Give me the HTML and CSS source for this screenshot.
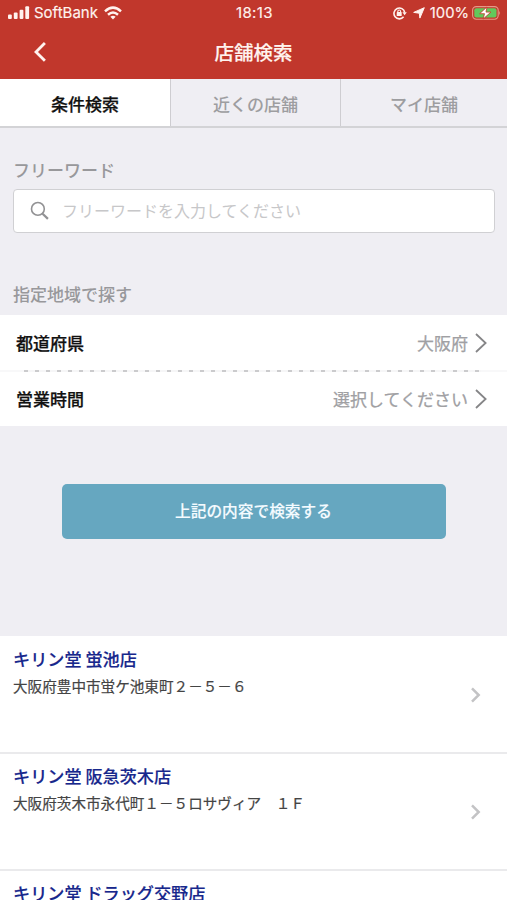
FILE: index.html
```html
<!DOCTYPE html>
<html lang="ja">
<head>
<meta charset="utf-8">
<title>店舗検索</title>
<link rel="stylesheet" href="styles.css">
</head>
<body>
<header class="header">
  <div class="status">
    <div class="status-left">
      <svg class="signal" width="22" height="14" viewBox="0 0 22 14" fill="currentColor"><rect x="0" y="8.6" width="3.8" height="4.4" rx="1"/><rect x="5.8" y="6.6" width="3.8" height="6.4" rx="1"/><rect x="11.6" y="3.8" width="3.8" height="9.2" rx="1"/><rect x="17.3" y="0.3" width="3.8" height="12.7" rx="1"/></svg>
      <span class="carrier">SoftBank</span>
      <svg class="wifi" width="18" height="14" viewBox="0 0 18 14" fill="none" stroke="currentColor" stroke-width="2.5"><path d="M1 5.3Q9-2 17 5.3"/><path d="M4 8.7Q9 4.3 14 8.7"/><path d="M6.4 10.7Q9 8.8 11.6 10.7L9 13.5Z" fill="currentColor" stroke="none"/></svg>
    </div>
    <span class="clock">18:13</span>
    <div class="status-right">
      <svg class="lock" width="14" height="14" viewBox="0 0 14 14" fill="none" stroke="currentColor"><path d="M10.6 10.8A5.4 5.4 0 1 1 11.7 6.5" stroke-width="1.6"/><path d="M9.4 6.3h4.4L11.6 9.3Z" fill="currentColor" stroke="none"/><rect x="3.7" y="6.1" width="5" height="4" rx=".6" fill="currentColor" stroke="none"/><path d="M4.8 6.5V5.4a1.4 1.4 0 0 1 2.8 0v1.1" stroke-width="1.1"/></svg>
      <svg class="location" width="12" height="12" viewBox="0 0 12 12" fill="currentColor" stroke="currentColor" stroke-width="1" stroke-linejoin="round"><path d="M11.3.7 6.9 11.1 6.3 6.2.7 5.4Z"/></svg>
      <span class="percent">100%</span>
      <svg class="battery" width="29" height="14" viewBox="0 0 29 14"><rect x=".6" y=".6" width="25.6" height="12.6" rx="3.6" fill="none" stroke="#e59a88" stroke-width="1.1"/><rect x="2.3" y="2.3" width="22.2" height="9.2" rx="2" fill="#62c95b"/><path d="M27.2 4.8q1.8 2.2 0 4.4Z" fill="#e59a88"/><path d="M15 .9 7.6 7.7h4.9l-1.4 5.4 7.8-7H14Z" fill="#fff" stroke="#c1372c" stroke-width=".8"/></svg>
    </div>
  </div>
  <div class="nav">
    <svg class="back" width="14" height="22" viewBox="0 0 14 22" fill="none" stroke="currentColor" stroke-width="2.8"><path d="M11.9 2 3 10.9l8.9 8.9"/></svg>
    <h1 class="title">店舗検索</h1>
  </div>
</header>
<nav class="tabs">
  <span class="tab active">条件検索</span>
  <span class="tab">近くの店舗</span>
  <span class="tab">マイ店舗</span>
</nav>
<main>
  <h2 class="label keyword-label">フリーワード</h2>
  <div class="search">
    <svg width="20" height="20" viewBox="0 0 20 20" fill="none" stroke="#929294"><circle cx="7.9" cy="7.9" r="6.4" stroke-width="1.6"/><path d="m12.6 12.7 5.3 5.2" stroke-width="2.2"/></svg>
    <span class="placeholder">フリーワードを入力してください</span>
  </div>
  <h2 class="label region-label">指定地域で探す</h2>
  <section class="filters">
    <div class="filter"><span class="filter-name">都道府県</span><span class="filter-value">大阪府</span><svg width="12" height="20" viewBox="0 0 12 20" fill="none" stroke="#858587" stroke-width="1.8"><path d="m1 1 9.6 9L1 19"/></svg></div>
    <div class="divider"></div>
    <div class="filter"><span class="filter-name">営業時間</span><span class="filter-value">選択してください</span><svg width="12" height="20" viewBox="0 0 12 20" fill="none" stroke="#858587" stroke-width="1.8"><path d="m1 1 9.6 9L1 19"/></svg></div>
  </section>
  <div class="submit">上記の内容で検索する</div>
  <section class="stores">
    <article class="store">
      <div><h3 class="store-name">キリン堂 蛍池店</h3><p class="address">大阪府豊中市蛍ケ池東町２－５－６</p></div>
      <svg width="11" height="16" viewBox="0 0 11 16" fill="none" stroke="#c3c3c5" stroke-width="2.5"><path d="m2 1.3 6.7 6.7L2 14.7"/></svg>
    </article>
    <article class="store">
      <div><h3 class="store-name">キリン堂 阪急茨木店</h3><p class="address">大阪府茨木市永代町１－５ロサヴィア　１Ｆ</p></div>
      <svg width="11" height="16" viewBox="0 0 11 16" fill="none" stroke="#c3c3c5" stroke-width="2.5"><path d="m2 1.3 6.7 6.7L2 14.7"/></svg>
    </article>
    <article class="store">
      <div><h3 class="store-name">キリン堂 ドラッグ交野店</h3></div>
    </article>
  </section>
</main>
</body>
</html>
```
FILE: styles.css
```css
* { box-sizing: border-box; }
body {
  margin: 0;
  height: 900px;
  overflow: hidden;
  background: #efeef3;
  color: #111;
  font-family: "Noto Sans CJK JP", sans-serif;
}
h1, h2, h3, p { margin: 0; }
svg { display: block; flex: none; }

.header { height: 79px; background: #c1372c; color: #fff3ef; }
.status {
  display: grid;
  grid-template-columns: 1fr 37px 1fr;
  align-items: center;
  height: 26px;
  padding: 0 6px 0 8px;
  font-family: Inter, sans-serif;
  font-size: 15px;
  line-height: 26px;
  -webkit-text-stroke: .15px;
}
.status-left, .status-right { display: flex; align-items: center; }
.status-right { justify-content: flex-end; }
.carrier { margin: 0 6px 0 4px; }
.clock { letter-spacing: .35px; }
.lock { margin-right: 6px; }
.location { margin-right: 5px; }
.percent { margin-right: 3px; font-size: 14.8px; }
.nav {
  display: grid;
  grid-template-columns: 61px 1fr 61px;
  align-items: center;
  height: 52px;
}
.back { margin-left: 33px; }
.title { text-align: center; font-size: 19.5px; font-weight: 500; line-height: 52px; -webkit-text-stroke: .15px; }

.tabs {
  display: grid;
  grid-template-columns: 170px 170px 1fr;
  grid-template-rows: 47px;
  height: 49px;
  border-bottom: 2px solid #d3d3d6;
}
.tab {
  border-left: 1px solid #cecdd1;
  color: #9d9da0;
  font-size: 17px;
  font-weight: 500;
  line-height: 49px;
  text-align: center;
}
.tab.active { border-left: 0; background: #fff; color: #111; -webkit-text-stroke: .25px; }

.label { margin-left: 13px; color: #98989b; font-size: 17px; font-weight: 500; line-height: 24px; }
.keyword-label { margin-top: 30px; }
.search {
  display: flex;
  align-items: center;
  gap: 12px;
  height: 44px;
  margin: 7px 12px 0 13px;
  padding-left: 16px;
  border: 1px solid #d0d0d3;
  border-radius: 4px;
  background: #fff;
}
.placeholder { padding-bottom: 3px; color: #c7c7c9; font-size: 16px; line-height: 24px; }
.region-label { margin-top: 49px; }

.filters { margin-top: 9px; background: #fff; }
.filter { display: flex; align-items: center; height: 55px; padding: 0 20px 0 16px; }
.filter:last-child { height: 54px; padding-bottom: 1px; }
.filter-name { flex: 1; padding-bottom: 1px; font-size: 17px; font-weight: 500; -webkit-text-stroke: .25px; }
.filter-value { margin-right: 7px; padding-bottom: 1px; color: #a0a0a3; font-size: 17px; -webkit-text-stroke: .25px; }
.divider {
  height: 2px;
  border-left: 24px solid #f8f8f9;
  border-right: 26px solid #f8f8f9;
  background: repeating-linear-gradient(90deg, #cbcbcd 0 4px, #f6f6f7 4px 11px);
}

.submit {
  width: 384px;
  height: 55px;
  margin: 58px auto 97px;
  border-radius: 5px;
  background: #66a7c0;
  color: #f4fbff;
  font-size: 15.7px;
  font-weight: 500;
  line-height: 53px;
  text-align: center;
  -webkit-text-stroke: .15px;
}

.stores { background: #fff; }
.store {
  display: flex;
  justify-content: space-between;
  align-items: flex-start;
  height: 118px;
  padding: 10px 26px 0 13px;
  border-bottom: 2px solid #eaeaec;
}
.store:nth-child(2) { height: 117px; padding-top: 9px; }
.store:nth-child(3) { height: 29px; padding-top: 9px; border-bottom: 0; }
.store svg { margin-top: 41px; }
.store-name { color: #17278c; font-size: 17.15px; font-weight: 500; line-height: 25px; -webkit-text-stroke: .15px; }
.address { margin-top: 3px; color: #444; font-size: 14.6px; line-height: 24px; -webkit-text-stroke: .2px; }
```
